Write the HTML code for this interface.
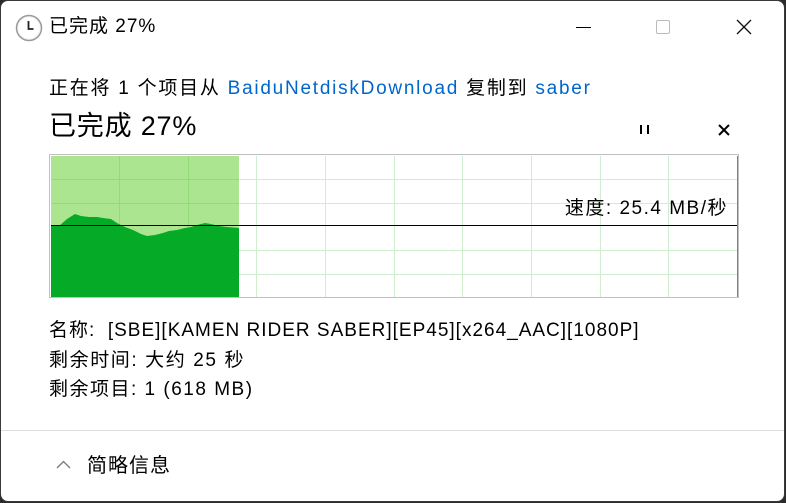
<!DOCTYPE html>
<html><head><meta charset="utf-8"><style>
*{margin:0;padding:0;box-sizing:border-box}
html,body{width:786px;height:503px;background:#2b2b2b;overflow:hidden}
#win{position:absolute;left:0;top:0;width:785px;height:502px;background:#fff;border:1px solid #3a3a3a;border-radius:8px;overflow:hidden;font-family:"Liberation Sans","Noto Sans CJK SC",sans-serif;color:#000}
.t{position:absolute;white-space:nowrap;font-size:19px;line-height:22px;letter-spacing:1px}
a{color:#0066cc;text-decoration:none}
</style></head><body><div id="win">
<svg style="position:absolute;left:14px;top:13px" width="28" height="28" viewBox="0 0 28 28"><circle cx="14" cy="14" r="12.5" fill="#f4f4f4" stroke="#9a9a9a" stroke-width="1.5"/><circle cx="14" cy="14" r="10.5" fill="#fff"/><path d="M13.5 7v8h5" fill="none" stroke="#222" stroke-width="1.8"/></svg>
<div class="t" style="left:48px;top:15px">已完成 27%</div>
<div style="position:absolute;left:575px;top:26px;width:15px;height:1px;background:#000"></div>
<div style="position:absolute;left:655px;top:19px;width:14px;height:14px;border:1px solid #bbb;border-radius:2px"></div>
<svg style="position:absolute;left:735px;top:18px" width="16" height="16"><path d="M1 1L15 15M15 1L1 15" stroke="#111" stroke-width="1.3"/></svg>
<div class="t" style="left:48px;top:77px;letter-spacing:1.75px">正在将 1 个项目从 <a>BaiduNetdiskDownload</a> 复制到 <a>saber</a></div>
<div class="t" style="left:48px;top:110px;font-size:27px;line-height:30px;letter-spacing:0.8px">已完成 27%</div>
<div style="position:absolute;left:639px;top:124px;width:2px;height:9px;background:#000"></div>
<div style="position:absolute;left:646px;top:124px;width:2px;height:9px;background:#000"></div>
<svg style="position:absolute;left:717px;top:123px" width="12" height="12"><path d="M1 1L11 11M11 1L1 11" stroke="#000" stroke-width="2"/></svg>
<svg style="position:absolute;left:47px;top:152px" width="692" height="146" viewBox="47 152 692 146">
<rect x="48.5" y="153.5" width="689" height="143" fill="#fff" stroke="#c0c0c0"/>
<g stroke="#cfeecf" stroke-width="1">
<path d="M118.5 155V296M187.5 155V296M255.5 155V296M324.5 155V296M393.5 155V296M461.5 155V296M530.5 155V296M599.5 155V296M667.5 155V296"/>
<path d="M50 178.5H737M50 202.5H737M50 249.5H737M50 273.5H737"/>
</g>
<rect x="50" y="155" width="188" height="141" fill="#abe58f"/>
<g stroke="#90dd78"><path d="M118.5 155V296M187.5 155V296M50 178.5H238M50 202.5H238"/></g>
<path d="M50 224L58 225L66 218L74 213L80 215L88 216L96 216L102 217L110 218L116 222L124 226L132 229L140 233L146 235L154 234L162 232L168 230L176 229L184 227L190 226L196 224L204 222L210 223L218 225L226 226L238 227V296H50Z" fill="#05ab27"/>
<line x1="50" y1="224.5" x2="737" y2="224.5" stroke="#000" stroke-width="1"/>
<line x1="736.5" y1="155" x2="736.5" y2="296" stroke="#3cb043"/>
</svg>
<div class="t" style="right:56px;top:197px;letter-spacing:1.5px">速度: 25.4 MB/秒</div>
<div class="t" style="left:48px;top:319px">名称:&nbsp; [SBE][KAMEN RIDER SABER][EP45][x264_AAC][1080P]</div>
<div class="t" style="left:48px;top:349px;letter-spacing:1.6px">剩余时间: 大约 25 秒</div>
<div class="t" style="left:48px;top:378px;letter-spacing:1.5px">剩余项目: 1 (618 MB)</div>
<div style="position:absolute;left:0;top:429px;width:785px;height:1px;background:#dcdcdc"></div>
<svg style="position:absolute;left:55px;top:459px" width="16" height="10"><path d="M1 8L7.5 1.5L14 8" fill="none" stroke="#777" stroke-width="1.3"/></svg>
<div class="t" style="left:86px;top:454px;font-size:20px;letter-spacing:1px">简略信息</div>
</div></body></html>
